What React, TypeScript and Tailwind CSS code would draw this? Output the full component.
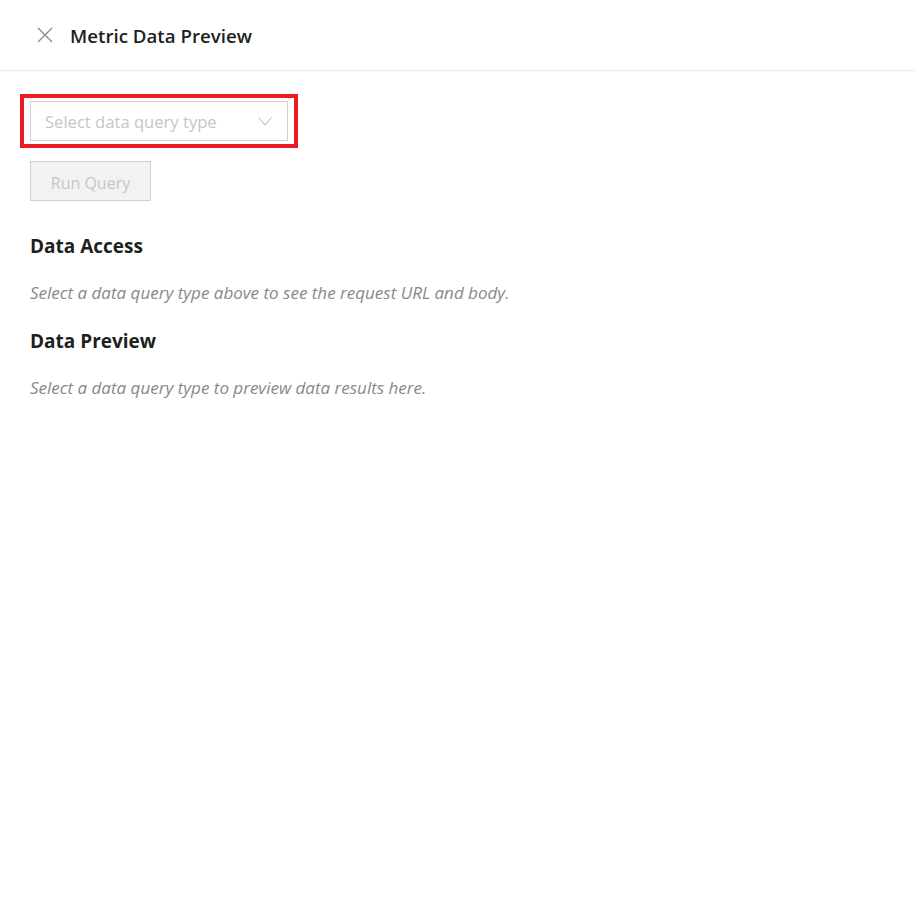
import React, { useState } from 'react';

const font = { fontFamily: '"Open Sans", "Noto Sans", sans-serif' };

const CloseIcon = () => (
  <svg width="16" height="16" viewBox="0 0 16 16" fill="none">
    <path d="M1 1L15 15M15 1L1 15" stroke="#8a8886" strokeWidth="1.3" />
  </svg>
);

const Chevron = () => (
  <svg width="14" height="9" viewBox="0 0 14 9" fill="none">
    <path d="M0.5 0.5L7 8L13.5 0.5" stroke="#b3b0ad" strokeWidth="1" />
  </svg>
);

export default function App() {
  const [queryType] = useState<string | null>(null);

  return (
    <div className="w-[915px] h-[908px] bg-white text-[#201f1e]" style={font}>
      <div className="h-[71px] flex items-center gap-[17px] px-[37px] border-b border-[#edebe9]">
        <button className="w-4 h-4 flex items-center justify-center -mt-px">
          <CloseIcon />
        </button>
        <h1 className="text-[18.7px] font-semibold leading-none mt-[2px]">Metric Data Preview</h1>
      </div>

      <div className="px-[30px] pt-[30px] flex flex-col">
        <div className="relative w-[258px]">
          <div className="h-10 border border-[#d2d0ce] flex items-center justify-between pl-[14px] pr-[15px]">
            <span className="text-[16.6px] text-[#c8c6c4] mt-[2px]">{queryType ?? 'Select data query type'}</span>
            <Chevron />
          </div>
          <div className="absolute -left-[10px] -top-[7px] w-[278px] h-[54px] border-4 border-[#ed1c24] pointer-events-none" />
        </div>

        <button
          disabled
          className="mt-5 w-[121px] h-10 pt-[3px] bg-[#f3f2f1] border border-[#d2d0ce] text-[16px] text-[#c8c6c4]"
        >
          Run Query
        </button>

        <h2 className="mt-[33px] text-[19px] font-bold leading-[24px]">Data Access</h2>
        <p className="mt-[24px] text-[17px] italic text-[#8a8886] leading-[22px]">
          Select a data query type above to see the request URL and body.
        </p>

        <h2 className="mt-[25px] text-[19px] font-bold leading-[24px]">Data Preview</h2>
        <p className="mt-[24px] text-[17px] italic text-[#8a8886] leading-[22px]">
          Select a data query type to preview data results here.
        </p>
      </div>
    </div>
  );
}
